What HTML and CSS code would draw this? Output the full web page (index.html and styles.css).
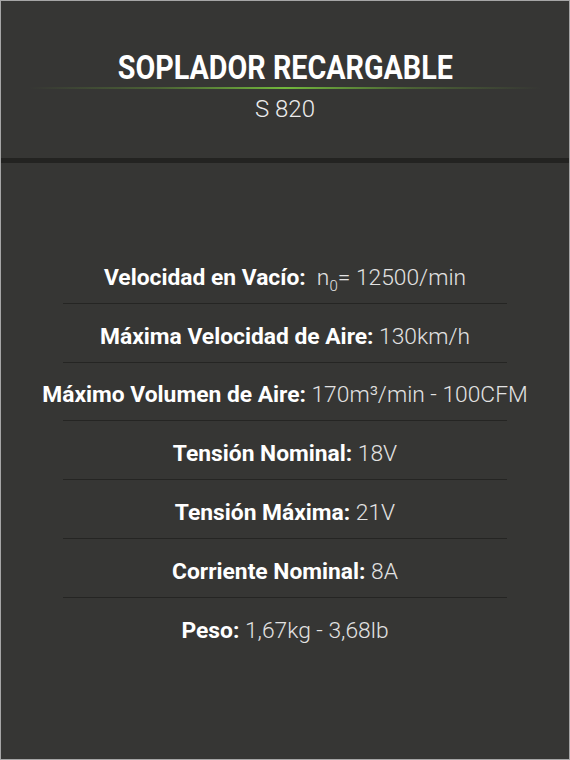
FILE: index.html
```html
<!DOCTYPE html>
<html lang="es">
<head>
<meta charset="utf-8">
<link rel="stylesheet" href="styles.css">
</head>
<body>
<div class="card">
  <header class="head">
    <h1 class="title"><span class="title-text">SOPLADOR RECARGABLE</span></h1>
    <div class="glow"></div>
    <div class="model">S 820</div>
  </header>
  <div class="band"></div>
  <ul class="specs">
    <li class="row"><span class="txt"><b>Velocidad en Vacío:</b>&nbsp; n<sub>0</sub>= 12500/min</span></li>
    <li class="row"><span class="txt"><b>Máxima Velocidad de Aire:</b> 130km/h</span></li>
    <li class="row"><span class="txt"><b>Máximo Volumen de Aire:</b> 170m³/min - 100CFM</span></li>
    <li class="row"><span class="txt"><b>Tensión Nominal:</b> 18V</span></li>
    <li class="row"><span class="txt"><b>Tensión Máxima:</b> 21V</span></li>
    <li class="row"><span class="txt"><b>Corriente Nominal:</b> 8A</span></li>
    <li class="row last"><span class="txt"><b>Peso:</b> 1,67kg - 3,68lb</span></li>
  </ul>
</div>
</body>
</html>
```
FILE: styles.css
```css
* { box-sizing: border-box; }
html, body { margin: 0; padding: 0; background: #363634; }
body { font-family: Roboto, "Liberation Sans", sans-serif; }
.card {
  width: 570px;
  height: 760px;
  border: 1px solid #a6a6a6;
  background: #363634;
  overflow: hidden;
}
.head {
  padding-top: 47px;
  padding-bottom: 35px;
  text-align: center;
}
.title {
  margin: 0;
  font-size: 34px;
  line-height: 39px;
  font-weight: 700;
  color: #ffffff;
  white-space: nowrap;
}
.title-text {
  display: inline-block;
  transform: scaleX(0.845);
}
.glow {
  width: 512px;
  height: 2px;
  margin: 0 auto;
  background: linear-gradient(90deg, rgba(110,170,60,0) 0%, rgba(100,150,55,0.45) 25%, #72b83c 50%, rgba(100,150,55,0.45) 75%, rgba(110,170,60,0) 100%);
}
.model {
  margin-top: 6px;
  font-size: 24px;
  line-height: 28px;
  font-weight: 300;
  color: #ececec;
}
.band {
  height: 5px;
  background: #232321;
}
.specs {
  list-style: none;
  margin: 82px 0 0;
  padding: 0;
}
.row {
  width: 444px;
  margin: 0 auto;
  display: flex;
  justify-content: center;
  padding: 20.8px 0 13px;
  border-bottom: 1px solid #252523;
  font-size: 22.8px;
  line-height: 24px;
  white-space: nowrap;
  color: #e2e2e2;
  font-weight: 300;
}
.row.last { border-bottom: none; }
.txt { flex: none; }
.txt b { font-weight: 700; color: #ffffff; }
.txt sub { font-size: 15px; line-height: 0; vertical-align: -6px; }
```
